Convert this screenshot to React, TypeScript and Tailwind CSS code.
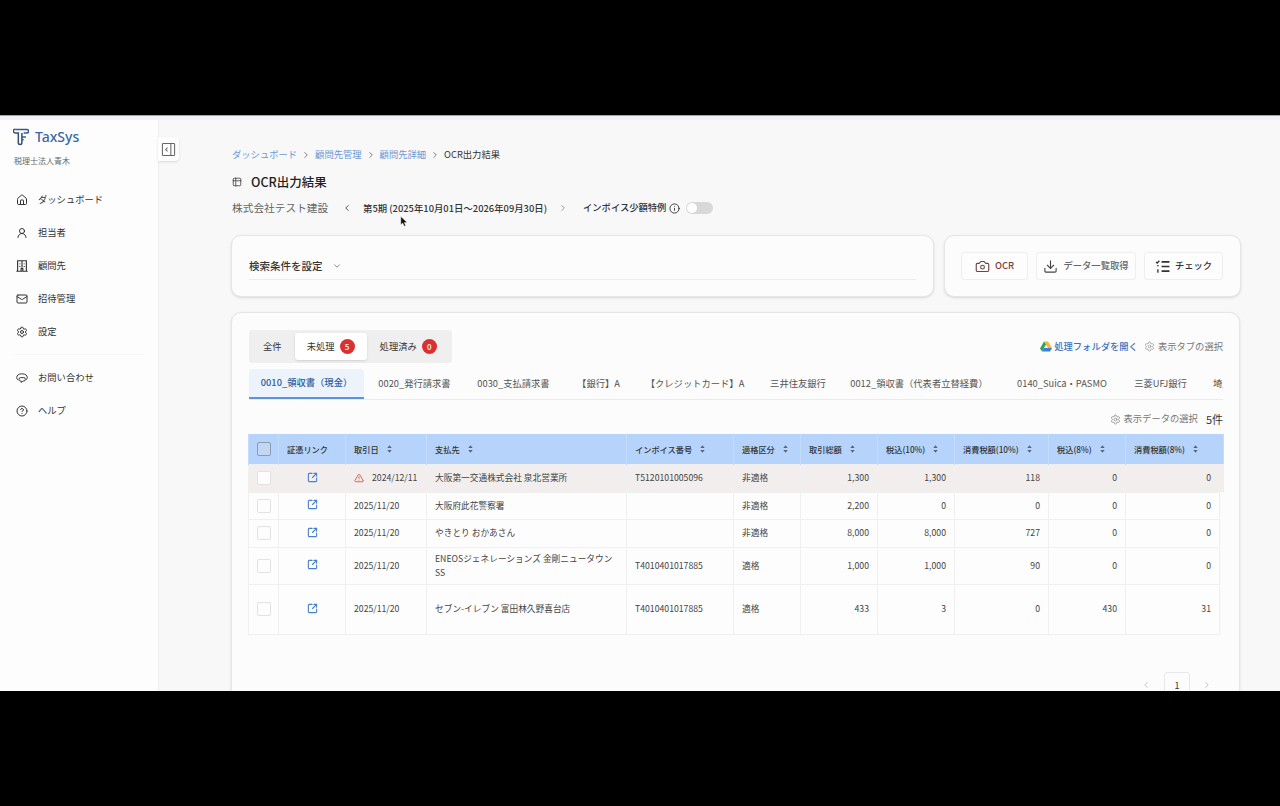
import {
  Camera,
  ChevronDown,
  ChevronLeft,
  ChevronRight,
  CircleHelp,
  Download,
  Home,
  Info,
  Mail,
  Settings,
  SquareArrowOutUpRight,
  Table2,
  TriangleAlert,
  UserRound,
} from 'lucide-react';
import type { ReactNode } from 'react';

const font = { fontFamily: '"Noto Sans CJK JP", "Noto Sans", sans-serif' };

function BuildingIcon() {
  return (
    <svg viewBox="0 0 16 16" className="h-3.5 w-3.5" fill="none" stroke="#333" strokeWidth="1.3">
      <path d="M3 14V2h10v12M1.5 14h13M8 2v8M5.5 5v1M5.5 8v1M10.5 5v1M10.5 8v1M7 14v-3h2v3" />
    </svg>
  );
}

function Logo() {
  return (
    <svg viewBox="0 0 18 20" className="h-[18px] w-[16px]" fill="none" stroke="#2f5d9b" strokeWidth="1.7">
      <path d="M2.5 1.5h13a1.5 1.5 0 0 1 0 4h-3.5" />
      <path d="M2.5 1.5a1.5 1.5 0 0 0-1 3.5c1 .6 3 .5 4.500.5v11a2 2 0 0 0 4 0V5.500" stroke="#34516f" />
      <path d="M10 10h4.500" />
      <path d="M10 13h2" />
    </svg>
  );
}

function DriveIcon() {
  return (
    <svg viewBox="0 0 24 22" className="h-[11px] w-[12px]">
      <path d="M8 1h8l8 13h-8z" fill="#f5b92c" />
      <path d="M8 1 0 15l4 6 8-14z" fill="#2aa65c" />
      <path d="M4 21h16l4-7H8z" fill="#3f7de0" />
    </svg>
  );
}

function PanelIcon() {
  return (
    <svg viewBox="0 0 16 16" className="h-[15px] w-[15px]" fill="none" stroke="#666" strokeWidth="1.1">
      <rect x="1.5" y="1.5" width="13" height="13" rx="1" />
      <path d="M10.5 1.5v13M7 6 5 8l2 2" />
    </svg>
  );
}

function ChatIcon() {
  return (
    <svg viewBox="0 0 16 16" className="h-3 w-3" fill="none" stroke="#333" strokeWidth="1.3">
      <path d="M3 11C1.800 10.200 1 8.900 1 7.300 1 4.500 3.500 2.500 7 2.500h2c3.500 0 6 2 6 4.800 0 1.300-.5 2.300-1.300 3" />
      <path d="M6 7.500h4.500a2 2 0 0 1 2 2v.5a2 2 0 0 1-2 2H9l-2 2v-2H6a2 2 0 0 1-2-2v-.5a2 2 0 0 1 2-2z" />
    </svg>
  );
}

function CheckListIcon() {
  return (
    <svg viewBox="0 0 16 14" className="h-[13px] w-[15px]" fill="none" stroke="#333" strokeWidth="1.8">
      <path d="M7 2h8.500M7 7h8.500M7 12h8.500" />
      <path d="M1 2.200 2.300 3.300 4.600.8" strokeWidth="1.400" />
      <path d="M2 6.200h2M2 7.800h.1M2 11h2M2 12.800h2" strokeWidth="1.300" />
    </svg>
  );
}

function SortIcon() {
  return (
    <svg viewBox="0 0 8 12" className="ml-[8px] h-[8px] w-[5px]" fill="#5a6470">
      <path d="M4 0 7.500 4.500h-7zM4 12 .5 7.500h7z" />
    </svg>
  );
}

function MouseCursor() {
  return (
    <svg viewBox="0 0 10 14" className="absolute left-[400px] top-[216px] h-[12px] w-[8px]">
      <path d="M1 0v10.500l2.500-2.200 1.700 4 1.800-.8-1.700-3.800H9z" fill="#111" stroke="#fff" strokeWidth="0.5" />
    </svg>
  );
}

function NavItem({ icon, label }: { icon: ReactNode; label: string }) {
  return (
    <div className="flex h-[33px] items-center gap-[9px] pl-[15px] text-[9.3px] text-[#333]">
      <span className="flex w-[14px] justify-center">{icon}</span>
      {label}
    </div>
  );
}

function Sidebar() {
  const ic = 'h-3 w-3 text-[#333]';
  return (
    <aside className="relative w-[159px] shrink-0 border-r border-[#eeeeee] bg-[#fdfdfd]">
      <div className="flex items-center gap-[6px] pl-[13px] pt-[8px]">
        <Logo />
        <span className="text-[14px] font-medium leading-[18px] text-[#3a66a8]" style={{ fontFamily: '"Noto Sans", sans-serif' }}>
          TaxSys
        </span>
      </div>
      <div className="mt-[9px] pl-[14px] text-[8px] leading-3 text-[#666]">税理士法人青木</div>
      <nav className="mt-[16px]">
        <NavItem icon={<Home className={ic} />} label="ダッシュボード" />
        <NavItem icon={<UserRound className={ic} />} label="担当者" />
        <NavItem icon={<BuildingIcon />} label="顧問先" />
        <NavItem icon={<Mail className={ic} />} label="招待管理" />
        <NavItem icon={<Settings className={ic} />} label="設定" />
        <div className="mx-[14px] my-[6px] border-t border-[#f6f6f6]" />
        <NavItem icon={<ChatIcon />} label="お問い合わせ" />
        <NavItem icon={<CircleHelp className={ic} />} label="ヘルプ" />
      </nav>
      <button className="absolute left-[158px] top-[17px] flex h-[24px] w-[21px] items-center justify-center rounded-r bg-[#fdfdfd] shadow-sm">
        <PanelIcon />
      </button>
    </aside>
  );
}

function Breadcrumb() {
  const links = ['ダッシュボード', '顧問先管理', '顧問先詳細'];
  return (
    <div className="flex h-3 items-center text-[9.3px]">
      {links.map((l) => (
        <span key={l} className="flex items-center">
          <span className="text-[#6f97d3]">{l}</span>
          <ChevronRight className="mx-[4px] h-[10px] w-[10px] text-[#666]" />
        </span>
      ))}
      <span className="text-[#333]">OCR出力結果</span>
    </div>
  );
}

function PageHead() {
  return (
    <div className="pl-[1px]">
      <Breadcrumb />
      <div className="mt-[12px] flex h-[18px] items-center">
        <Table2 className="h-[10px] w-[10px] text-[#444]" />
        <span className="ml-[9px] text-[12.5px] font-medium text-[#222]">OCR出力結果</span>
      </div>
      <div className="mt-[8px] flex h-[18px] items-center">
        <span className="w-[110px] text-[10.7px] text-[#666]">株式会社テスト建設</span>
        <ChevronLeft className="h-[10px] w-[10px] text-[#333]" />
        <span className="ml-[11px] w-[195px] whitespace-nowrap text-[9.4px] font-medium text-[#333]">
          第5期 (2025年10月01日～2026年09月30日)
        </span>
        <ChevronRight className="h-[10px] w-[10px] text-[#888]" />
        <span className="ml-[15px] text-[9.3px] font-medium text-[#333]">インボイス少額特例</span>
        <Info className="ml-[3px] h-[11px] w-[11px] text-[#333]" />
        <span className="ml-[6px] flex h-[12px] w-[27px] items-center rounded-full bg-[#d8d8d8] pl-[1px]">
          <span className="h-[10px] w-[10px] rounded-full bg-white" />
        </span>
      </div>
    </div>
  );
}

function ActionButton({ icon, label, cls, w }: { icon: ReactNode; label: string; cls: string; w: string }) {
  return (
    <button className={`flex h-[28px] items-center justify-center gap-[5px] rounded-[3px] border border-[#eeeeee] bg-[#fdfdfd] text-[9.3px] font-medium ${w} ${cls}`}>
      {icon}
      {label}
    </button>
  );
}

function TopCards() {
  return (
    <div className="mt-[18px] flex gap-[10px]">
      <div className="h-[62px] w-[703px] rounded-[10px] border border-[#e6e6e6] bg-[#fcfcfc] px-[17px] pt-[20px] shadow-sm">
        <div className="flex h-[24px] items-center border-b border-[#ececec] pb-[4px]">
          <span className="text-[10.5px] font-medium text-[#333]">検索条件を設定</span>
          <ChevronDown className="ml-[9px] h-[10px] w-[10px] text-[#777]" />
        </div>
      </div>
      <div className="flex h-[62px] w-[297px] items-center gap-[8px] rounded-[10px] border border-[#e6e6e6] bg-[#fcfcfc] pl-[16px] shadow-sm">
        <ActionButton w="w-[67px]" cls="text-[#7b3b3b]" label="OCR" icon={<Camera className="h-[15px] w-[15px] text-[#6d4444]" strokeWidth={1.8} />} />
        <ActionButton w="w-[100px]" cls="text-[#666]" label="データ一覧取得" icon={<Download className="h-[15px] w-[15px] text-[#444]" strokeWidth={1.8} />} />
        <ActionButton w="w-[79px]" cls="text-[#333]" label="チェック" icon={<CheckListIcon />} />
      </div>
    </div>
  );
}

function Badge({ n }: { n: number }) {
  return (
    <span className="flex h-[15px] w-[15px] items-center justify-center rounded-full bg-[#dc2f2f] text-[8px] font-medium text-white">
      {n}
    </span>
  );
}

function StatusTabs() {
  return (
    <div className="flex h-[33px] w-[203px] items-center rounded-[3px] bg-[#efefef] p-[1px] text-[9.3px] text-[#333]">
      <span className="pl-[13px] pr-[13px]">全件</span>
      <span className="flex h-[27px] w-[72px] items-center justify-center gap-[5px] rounded-[3px] bg-white shadow-sm">
        未処理
        <Badge n={5} />
      </span>
      <span className="ml-[13px] flex items-center gap-[5px]">
        処理済み
        <Badge n={0} />
      </span>
    </div>
  );
}

const tabs = [
  { label: '0020_発行請求書', w: 'w-[101px]' },
  { label: '0030_支払請求書', w: 'w-[97px]' },
  { label: '【銀行】A', w: 'w-[73px]' },
  { label: '【クレジットカード】A', w: 'w-[120px]' },
  { label: '三井住友銀行', w: 'w-[86px]' },
  { label: '0012_領収書（代表者立替経費）', w: 'w-[156px]' },
  { label: '0140_Suica・PASMO', w: 'w-[130px]' },
  { label: '三菱UFJ銀行', w: 'w-[67px]' },
];

function CategoryTabs() {
  return (
    <div className="mt-[6px] flex h-[31px] overflow-hidden border-b border-[#eaeaea] text-[9.3px] text-[#555]">
      <div className="flex h-[30px] w-[115px] shrink-0 items-center justify-center rounded-t-[4px] border-b-2 border-[#5b93dc] bg-[#edf3fb] font-medium text-[#2f5d9b]">
        0010_領収書（現金）
      </div>
      {tabs.map((t) => (
        <div key={t.label} className={`flex shrink-0 items-center justify-center whitespace-nowrap ${t.w}`}>
          {t.label}
        </div>
      ))}
      <div className="flex shrink-0 items-center pl-[19px]">埼玉</div>
    </div>
  );
}

const columns = [
  { label: '', w: 'w-[30px]' },
  { label: '証憑リンク', w: 'w-[67px]' },
  { label: '取引日', w: 'w-[81px]', sort: true },
  { label: '支払先', w: 'w-[200px]', sort: true },
  { label: 'インボイス番号', w: 'w-[107px]', sort: true },
  { label: '適格区分', w: 'w-[67px]', sort: true },
  { label: '取引総額', w: 'w-[77px]', sort: true },
  { label: '税込(10%)', w: 'w-[77px]', sort: true },
  { label: '消費税額(10%)', w: 'w-[94px]', sort: true },
  { label: '税込(8%)', w: 'w-[77px]', sort: true },
  { label: '消費税額(8%)', w: 'w-[94px]', sort: true },
];

const rows = [
  { h: 'h-[28px]', warn: true, date: '2024/12/11', payee: '大阪第一交通株式会社 泉北営業所', inv: 'T5120101005096', kind: '非適格', nums: ['1,300', '1,300', '118', '0', '0'] },
  { h: 'h-[27px]', date: '2025/11/20', payee: '大阪府此花警察署', inv: '', kind: '非適格', nums: ['2,200', '0', '0', '0', '0'] },
  { h: 'h-[28px]', date: '2025/11/20', payee: 'やきとり おかあさん', inv: '', kind: '非適格', nums: ['8,000', '8,000', '727', '0', '0'] },
  { h: 'h-[37px]', date: '2025/11/20', payee: 'ENEOSジェネレーションズ 金剛ニュータウンSS', inv: 'T4010401017885', kind: '適格', nums: ['1,000', '1,000', '90', '0', '0'] },
  { h: 'h-[50px]', date: '2025/11/20', payee: 'セブン-イレブン 富田林久野喜台店', inv: 'T4010401017885', kind: '適格', nums: ['433', '3', '0', '430', '31'] },
];

const td = 'border border-[#f0f0f0] px-[8px] align-middle';

function DataTable() {
  return (
    <table className="-ml-[1px] mt-[6px] w-[975px] table-fixed border-collapse text-[8.7px] text-[#444]">
      <colgroup>
        {columns.map((c, i) => (
          <col key={i} className={c.w} />
        ))}
        <col className="w-[4px]" />
      </colgroup>
      <thead>
        <tr className="h-[30px] bg-[#b5d3fb]">
          {columns.map((c, i) => (
            <th
              key={i}
              colSpan={i === columns.length - 1 ? 2 : 1}
              className="border-x border-[#c4dcfb] px-[8px] text-left text-[8.2px] font-medium text-[#333]"
            >
              {i === 0 ? (
                <span className="block h-[14px] w-[14px] rounded-[2px] border border-[#8d9bb0] bg-[#c4d7f2]" />
              ) : (
                <span className="flex items-center whitespace-nowrap">
                  {c.label}
                  {c.sort && <SortIcon />}
                </span>
              )}
            </th>
          ))}
        </tr>
      </thead>
      <tbody>
        {rows.map((r) => {
          const bg = r.warn ? 'bg-[#f2eeee]' : 'bg-[#fdfdfd]';
          return (
            <tr key={r.payee} className={r.h}>
              <td className={`${td} px-0 ${bg}`}>
                <span className="mx-auto block h-[14px] w-[14px] rounded-[2px] border border-[#e2e2e2] bg-[#fdfdfd]" />
              </td>
              <td className={`${td} ${bg}`}>
                <SquareArrowOutUpRight className="mx-auto mb-[2px] h-[11px] w-[11px] text-[#4a7fc9]" strokeWidth={2.4} />
              </td>
              <td className={`${td} whitespace-nowrap ${bg}`}>
                <span className="flex items-center">
                  {r.warn && <TriangleAlert className="mr-[8px] h-[10px] w-[10px] text-[#cf4b4b]" />}
                  {r.date}
                </span>
              </td>
              <td className={`${td} leading-[14px] ${bg}`}>{r.payee}</td>
              <td className={`${td} ${bg}`}>{r.inv}</td>
              <td className={`${td} ${bg}`}>{r.kind}</td>
              {r.nums.map((n, i) => (
                <td key={i} className={`${td} text-right ${bg}`}>
                  {n}
                </td>
              ))}
              <td className={r.warn ? 'bg-[#f2eeee]' : ''} />
            </tr>
          );
        })}
      </tbody>
    </table>
  );
}

function Pagination() {
  return (
    <div className="mt-[40px] flex h-[20px] items-center justify-end pr-[11px] text-[9px] text-[#333]">
      <ChevronLeft className="h-[10px] w-[10px] text-[#bbb]" />
      <span className="ml-[13px] mr-[12px] flex h-[26px] w-[26px] items-start justify-center rounded-[3px] border border-[#e8e8e8] pt-[6px]">1</span>
      <ChevronRight className="h-[10px] w-[10px] text-[#bbb]" />
    </div>
  );
}

function ResultCard() {
  return (
    <div className="mt-[15px] h-[420px] w-[1009px] rounded-[10px] border border-[#e6e6e6] bg-[#fcfcfc] pl-[17px] pr-[16px] pt-[17px] shadow-sm">
      <div className="flex items-center justify-between">
        <StatusTabs />
        <div className="flex items-center text-[9.3px]">
          <DriveIcon />
          <span className="ml-[2px] font-medium text-[#3f72bb]">処理フォルダを開く</span>
          <Settings className="ml-[6px] h-[11px] w-[11px] text-[#888]" strokeWidth={1.4} />
          <span className="ml-[3px] text-[#777]">表示タブの選択</span>
        </div>
      </div>
      <CategoryTabs />
      <div className="mt-[10px] flex h-[18px] items-center justify-end text-[9.3px] text-[#777]">
        <Settings className="mr-[3px] h-[11px] w-[11px]" strokeWidth={1.4} />
        表示データの選択
        <span className="ml-[8px] text-[11px] text-[#333]">5件</span>
      </div>
      <DataTable />
      <Pagination />
    </div>
  );
}

export default function App() {
  return (
    <div className="flex h-[806px] flex-col bg-black" style={font}>
      <div className="mt-[115px] flex h-[576px] flex-col overflow-hidden bg-[#f8f8f8]">
        <div className="h-[5px] shrink-0 border-t border-[#a8a8a8] bg-[#eef1f6]" />
        <div className="flex min-h-0 flex-1">
          <Sidebar />
          <main className="min-w-0 flex-1 pl-[72px] pt-[29px]">
            <PageHead />
            <TopCards />
            <ResultCard />
          </main>
        </div>
      </div>
      <MouseCursor />
    </div>
  );
}
